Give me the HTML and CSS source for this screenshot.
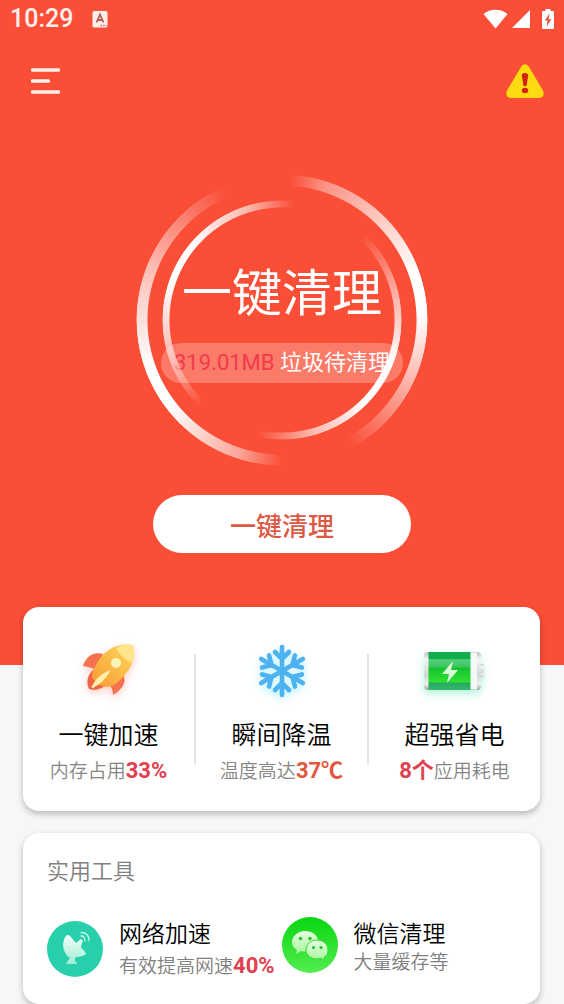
FILE: index.html
```html
<!DOCTYPE html>
<html lang="zh-CN">
<head>
  <meta charset="UTF-8" />
  <meta name="viewport" content="width=device-width, initial-scale=1.0"/>
  <title>一键清理</title>
  <link rel="stylesheet" href="styles.css">
</head>
<body>

  <!-- HERO -->
  <header class="hero">
    <div class="status-bar">
      <span class="clock">10:29</span>
      <svg class="status-app" width="16" height="17" viewBox="0 0 16 17">
        <rect x="0.500" width="15" height="16.500" rx="1.500" fill="#fff0ec"/>
        <path d="M4.500 11.500 8 3.500l3.500 8M5.700 9h4.600" fill="none" stroke="#b5604f" stroke-width="1.800"/>
        <path d="M8.500 14.500h6" stroke="#c8705f" stroke-width="1.500" stroke-dasharray="1.500 1"/>
      </svg>
      <div class="status-icons">
        <svg width="25" height="20" viewBox="0 0 25 20"><path d="M12.500 19.500 0.500 5C7-0.700 18-0.700 24.500 5z" fill="#fff"/></svg>
        <svg width="18" height="18" viewBox="0 0 18 18"><path d="M18 0v18H0z" fill="#fff"/></svg>
        <svg class="battery" width="12" height="20" viewBox="0 0 12 20">
          <path d="M3.500 0h5v2H11q1 0 1 1v16q0 1-1 1H1q-1 0-1-1V3q0-1 1-1h2.500z" fill="#fff"/>
          <path d="M7.500 4.500 2.800 11.500h2.700L4.700 17.500l4.700-7.300H6.700z" fill="#d9573f"/>
        </svg>
      </div>
    </div>

    <nav class="toolbar">
      <button class="icon-btn" aria-label="菜单">
        <svg width="29" height="26" viewBox="0 0 29 26">
          <path d="M1.500 2h26M1.500 13h16M1.500 24h26" stroke="#fff0ec" stroke-width="3.400" stroke-linecap="round"/>
        </svg>
      </button>
      <button class="icon-btn" aria-label="警告">
        <svg width="38" height="34" viewBox="0 0 38 34">
          <path d="M15.300 2.500q3.700-4.500 7.400 0L37 26.500q2.400 6.500-4 7.500H5q-6.400-1-4-7.500z" fill="#fddb13"/>
          <path d="M15.800 11.500q0-2.500 3.200-2.500t3.200 2.500L20.500 22h-3z" fill="#d3220b"/>
          <ellipse cx="19" cy="26.500" rx="3.200" ry="2.700" fill="#d3220b"/>
        </svg>
      </button>
    </nav>

    <div class="dial">
      <div class="ring ring-outer"></div>
      <div class="ring ring-inner"></div>
      <div class="dial-text">
        <h1 class="dial-title">一键清理</h1>
        <p class="junk"><span class="junk-size">319.01MB</span> 垃圾待清理</p>
      </div>
    </div>

    <button class="clean-btn">一键清理</button>
  </header>

  <main class="content">
    <!-- FEATURES -->
    <section class="card features">
      <button class="feature">
        <svg class="feature-icon glow-red" viewBox="0 0 60 60">
          <defs>
            <linearGradient id="rocket" x1="1" y1="0" x2="0" y2="1">
              <stop offset="0" stop-color="#ffd95c"/><stop offset="1" stop-color="#f99a35"/>
            </linearGradient>
          </defs>
          <path d="M24 13C14 10 7 16 4 25q9 1 15 5z" fill="#f4724f"/>
          <path d="M44 33c4 8 0 15-10 21q0-7-5-12z" fill="#f4724f"/>
          <path d="M14 29c-6 6-7 12-4 19 6 2 13 0 19-5z" fill="#ee6543"/>
          <path d="M54 4C39 1 24 9 17 24q-6 10-3 14 6 8 14 8 7 0 15-9C53 27 57 16 54 4z" fill="url(#rocket)"/>
          <path d="M54 4q-9-1-17 3 4 9 16 15 3-9 1-18z" fill="#ffe58e"/>
          <circle cx="37" cy="22" r="5" fill="#fff3b8"/>
          <path d="M29 30q3-3 1 2-5 9-16 15-2 0-1-2 5-10 16-15z" fill="#fff0ad"/>
        </svg>
        <span class="feature-title">一键加速</span>
        <span class="feature-note">内存占用<b class="red">33%</b></span>
      </button>
      <span class="divider"></span>
      <button class="feature">
        <svg class="feature-icon glow-blue" viewBox="0 0 60 60">
          <defs>
            <g id="arm"><path d="M30 30V6M23 11l7 7 7-7"/></g>
          </defs>
          <path d="M30 10 48 20v22L30 52 12 42V20z" fill="#dcfaff"/>
          <g fill="none" stroke="#4eb2f0" stroke-width="4.600" stroke-linecap="round">
            <use href="#arm"/>
            <use href="#arm" transform="rotate(60 30 30)"/>
            <use href="#arm" transform="rotate(120 30 30)"/>
            <use href="#arm" transform="rotate(180 30 30)"/>
            <use href="#arm" transform="rotate(240 30 30)"/>
            <use href="#arm" transform="rotate(300 30 30)"/>
          </g>
        </svg>
        <span class="feature-title">瞬间降温</span>
        <span class="feature-note">温度高达<b class="orange">37℃</b></span>
      </button>
      <span class="divider"></span>
      <button class="feature">
        <svg class="feature-icon glow-green" viewBox="0 0 60 60">
          <defs>
            <linearGradient id="cell" x1="0" y1="0" x2="0" y2="1">
              <stop offset="0" stop-color="#10ad4d"/><stop offset=".18" stop-color="#10ad4d"/>
              <stop offset=".2" stop-color="#57cd78"/><stop offset=".38" stop-color="#3cc763"/>
              <stop offset=".43" stop-color="#16c232"/><stop offset=".78" stop-color="#2ee02f"/>
              <stop offset=".82" stop-color="#25aa60"/><stop offset="1" stop-color="#35b86f"/>
            </linearGradient>
            <linearGradient id="metal" x1="0" y1="0" x2="0" y2="1">
              <stop offset="0" stop-color="#b9c0be"/><stop offset=".2" stop-color="#f4f6f5"/>
              <stop offset=".6" stop-color="#d3d8d7"/><stop offset=".85" stop-color="#eef1f0"/><stop offset="1" stop-color="#99a2a0"/>
            </linearGradient>
          </defs>
          <rect x="53" y="23" width="6" height="13" rx="2.500" fill="url(#metal)"/>
          <rect x="-1" y="11" width="57" height="38" rx="4" fill="url(#metal)"/>
          <rect x="45" y="11.500" width="7" height="37" fill="#f2faf6"/>
          <rect x="3.500" y="11" width="42" height="38" fill="url(#cell)"/>
          <path d="M28 20 17 33h7l-2 9 11-13h-7z" fill="#d9ffd9"/>
        </svg>
        <span class="feature-title">超强省电</span>
        <span class="feature-note"><b class="red">8个</b>应用耗电</span>
      </button>
    </section>

    <!-- TOOLS -->
    <section class="card tools">
      <h2 class="tools-title">实用工具</h2>
      <div class="tool-list">
        <button class="tool">
          <svg class="tool-icon" viewBox="0 0 56 56">
            <defs>
              <linearGradient id="dish" x1="0" y1="0" x2="0" y2="1">
                <stop offset="0" stop-color="#f4fffb"/><stop offset="1" stop-color="#9eebd4"/>
              </linearGradient>
            </defs>
            <circle cx="28" cy="28" r="28" fill="#27d0ab"/>
            <path d="M20 14c4 0 6 5 9 8l5-4q3 1 1 4l-1 4c1 3 5 4 5 7-2 2-6 3-9 3l-2 1v3l2 2q1 1-1 1h-9q-2 0 0-2l3-4C14 31 15 18 20 14z" fill="url(#dish)"/>
            <path d="M34 15q4 0 4 5M34 11.500q8 0 8 8" fill="none" stroke="#c4f6e7" stroke-width="1.300" stroke-linecap="round"/>
          </svg>
          <span class="tool-text">
            <span class="tool-name">网络加速</span>
            <span class="tool-note tall">有效提高网速<b class="red">40%</b></span>
          </span>
        </button>
        <button class="tool">
          <svg class="tool-icon" viewBox="0 0 56 56">
            <defs>
              <linearGradient id="wechat" x1="0" y1="0" x2="0" y2="1">
                <stop offset="0" stop-color="#08d611"/><stop offset="1" stop-color="#54ed4f"/>
              </linearGradient>
              <linearGradient id="bubble" x1="0" y1="0" x2="0" y2="1">
                <stop offset="0" stop-color="#e4ffe0"/><stop offset="1" stop-color="#a6f59d"/>
              </linearGradient>
            </defs>
            <circle cx="28" cy="28" r="28" fill="url(#wechat)"/>
            <path d="M23 14c-7 0-13 5-13 11 0 4 2 6 5 8l-1 4 5-3q3 1 8 0c5-1 9-5 9-10 0-6-6-10-13-10z" fill="url(#bubble)"/>
            <path d="M35 23c-6 0-11 4-11 10 0 5 5 9 11 9l4-.5 4 2-1-3c3-2 4-4 4-7.500 0-6-5-10-11-10z" fill="url(#bubble)" stroke="#2ddd2e" stroke-width="1"/>
            <g fill="#26b928">
              <circle cx="18.500" cy="21.500" r="1.700"/><circle cx="28" cy="21.500" r="1.700"/>
              <circle cx="31.500" cy="30.500" r="1.500"/><circle cx="39" cy="30.500" r="1.500"/>
            </g>
          </svg>
          <span class="tool-text">
            <span class="tool-name">微信清理</span>
            <span class="tool-note">大量缓存等</span>
          </span>
        </button>
      </div>
    </section>
  </main>

</body>
</html>
```

FILE: styles.css
```css
* { margin: 0; padding: 0; box-sizing: border-box; }
body {
  background-color: #f7f7f7;
  font-family: Roboto, "Noto Sans CJK SC", sans-serif;
  font-weight: 350;
  color: #000;
}
button {
  border: none;
  background: none;
  font: inherit;
  color: inherit;
  cursor: pointer;
}
svg { display: block; }

.hero {
  display: flex;
  flex-direction: column;
  align-items: center;
  padding-bottom: 112px;
  background-color: #fa4e36;
}

.status-bar {
  display: flex;
  align-items: center;
  align-self: stretch;
  height: 38px;
  padding: 0 10px;
  color: #fff0ec;
}
.clock {
  font-size: 25px;
  font-weight: 500;
  line-height: 38px;
}
.status-app { margin-left: 19px; }
.status-icons {
  display: flex;
  align-items: center;
  gap: 4px;
  margin-left: auto;
}
.battery { margin-left: 8px; }

.toolbar {
  display: flex;
  justify-content: space-between;
  align-items: center;
  align-self: stretch;
  height: 86px;
  padding: 0 20px 0 31px;
}

/* cleaning dial */
.dial {
  display: grid;
  justify-items: center;
  width: 292px;
  height: 292px;
  margin: 50px 0 29px;
}
.ring, .dial-text {
  grid-area: 1 / 1;
}
.ring { border-radius: 50%; }
.ring-outer {
  width: 292px;
  height: 292px;
  background: conic-gradient(
    transparent 3deg, rgba(255, 255, 255, 0.4) 18deg, #fff 70deg, #fff 88deg,
    rgba(255, 255, 255, 0.6) 115deg, transparent 152deg, transparent 180deg,
    rgba(255, 255, 255, 0.5) 198deg, #fff 232deg, #fff 250deg,
    rgba(255, 255, 255, 0.65) 290deg, transparent 337deg);
  mask: radial-gradient(circle, transparent 134px, #000 135px, #000 145px, transparent 146px);
}
.ring-inner {
  align-self: center;
  width: 240px;
  height: 240px;
  background: conic-gradient(from 10deg,
    transparent 33deg, rgba(255, 255, 255, 0.6) 70deg,
    #fff 102deg, #fff 125deg, rgba(255, 255, 255, 0.6) 155deg, transparent 182deg,
    transparent 213deg, rgba(255, 255, 255, 0.7) 250deg, #fff 280deg, #fff 300deg,
    rgba(255, 255, 255, 0.6) 333deg, transparent 356deg);
  mask: radial-gradient(circle, transparent 112px, #000 113px, #000 119px, transparent 120px);
}
.dial-text {
  display: flex;
  flex-direction: column;
  align-items: center;
  gap: 17px;
  padding-top: 88px;
}
.dial-title {
  font-size: 50px;
  font-weight: 400;
  line-height: 64px;
  color: #fff;
}
.junk {
  padding: 0 13px;
  border-radius: 20px;
  background-color: rgba(255, 255, 255, 0.25);
  font-size: 22px;
  font-weight: 400;
  line-height: 40px;
  color: #fff;
  white-space: nowrap;
}
.junk-size { color: #f03a4c; }

.clean-btn {
  height: 58px;
  padding: 0 77px;
  border-radius: 29px;
  background-color: #fff;
  font-size: 26px;
  font-weight: 500;
  color: #dc5a45;
}

/* cards */
.content {
  display: flex;
  flex-direction: column;
  gap: 22px;
  margin-top: -58px;
  padding: 0 24px 0 23px;
}
.card {
  border-radius: 16px;
  background-color: #fff;
  box-shadow: 0 3px 6px rgba(0, 0, 0, 0.25);
}
.red { color: #e0404f; }
.orange { color: #e2573f; }

.features {
  display: flex;
  align-items: flex-start;
  padding: 34px 0 22px;
}
.feature {
  display: flex;
  flex: 1;
  flex-direction: column;
  align-items: center;
}
.feature-icon {
  width: 60px;
  height: 60px;
  margin-bottom: 16px;
  overflow: visible;
}
.glow-red { filter: drop-shadow(0 3px 4px rgba(255, 90, 70, 0.3)); }
.glow-blue { filter: drop-shadow(0 3px 4px rgba(80, 220, 255, 0.4)); }
.glow-green { filter: drop-shadow(0 4px 4px rgba(40, 220, 160, 0.35)); }
.feature-title {
  font-size: 25px;
  line-height: 38px;
}
.feature-note {
  font-size: 19px;
  line-height: 34px;
  color: #858585;
  white-space: nowrap;
}
.feature-note b, .tool-note b {
  font-size: 22px;
  font-weight: 700;
  line-height: 1;
}
.divider {
  width: 2px;
  height: 110px;
  margin-top: 13px;
  background-color: #e4e4e4;
}

.tools {
  padding: 23px 24px;
}
.tools-title {
  font-size: 22px;
  font-weight: 350;
  line-height: 32px;
  color: #808080;
}
.tool-list {
  display: grid;
  grid-template-columns: 1fr 1fr;
  align-items: start;
  margin-top: 29px;
}
.tool {
  display: flex;
  align-items: center;
  gap: 16px;
  text-align: left;
}
.tool-icon {
  flex: none;
  width: 56px;
  height: 56px;
}
.tool-text {
  display: flex;
  flex-direction: column;
  white-space: nowrap;
}
.tool-name {
  font-size: 23px;
  line-height: 36px;
}
.tool-note {
  font-size: 19px;
  line-height: 20px;
  color: #808080;
}
.tall { line-height: 28px; }
```
